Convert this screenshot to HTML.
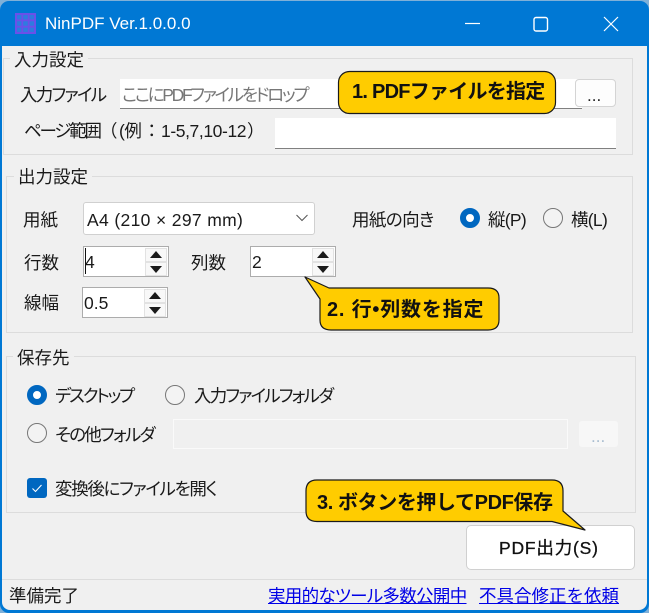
<!DOCTYPE html>
<html><head><meta charset="utf-8">
<style>
html,body{margin:0;padding:0;width:649px;height:613px;overflow:hidden;background:#7fb0d8}
*{box-sizing:border-box}
body{position:relative;font-family:"Liberation Sans","Noto Sans CJK JP",sans-serif;font-size:17.5px;color:#111}
.a{position:absolute}
.t{position:absolute;white-space:nowrap;line-height:20px;font-size:17.5px;color:#1a1a1a}
.p{font-feature-settings:"palt"}
.win{position:absolute;left:0;top:1px;width:649px;height:612px;background:#0078d4;border-radius:9px}
.client{position:absolute;left:2px;top:46px;width:645px;height:564px;background:#f0f0f0;border-radius:0 0 8px 8px}
.grp{position:absolute;border:1px solid #dcdcdc}
.leg{position:absolute;background:#f0f0f0;padding:0 4px;white-space:nowrap;line-height:20px;font-size:17.5px;color:#1a1a1a}
.inp{position:absolute;background:#fff;border-bottom:1px solid #808080}
.btn{position:absolute;background:#fdfdfd;border:1px solid #d0d0d0;border-radius:4px}
.spin{position:absolute;background:#fff;border:1px solid #acacac;width:86px;height:31px}
.sb{position:absolute;left:61px;width:22px;height:14px;background:#f8f8f8;border:1px solid #e2e2e2}
.up,.dn{position:absolute;left:4px;width:0;height:0;border-left:6px solid transparent;border-right:6px solid transparent}
.up{top:2px;border-bottom:7px solid #1a1a1a}
.dn{top:3px;border-top:7px solid #1a1a1a}
.rad{position:absolute;width:20px;height:20px;border-radius:50%;border:1px solid #777;background:#f3f3f3}
.rad.on{border:6px solid #0067c0;background:#fff}
.c{position:absolute;white-space:nowrap;font-weight:bold;font-size:20px;line-height:22px;color:#111}
</style></head><body>
<div class="win"></div>
<svg class="a" style="left:15px;top:13px" width="21" height="21" viewBox="0 0 21 21"><rect x="1" y="1" width="19" height="19" fill="#2f7ae0" stroke="#6a50e8" stroke-width="2"/><path d="M7.300 0V21M13.700 0V21M0 7.300H21M0 13.700H21" stroke="#6a50e8" stroke-width="1.800" fill="none"/></svg>
<div class="t" style="left:45px;top:13px;color:#fff;font-size:17px;line-height:22px">NinPDF Ver.1.0.0.0</div>
<svg class="a" style="left:460px;top:10px" width="170" height="28"><path d="M5 13.5H20" stroke="#fff" stroke-width="1.2"/><rect x="74" y="7.5" width="13.5" height="13.5" rx="2" fill="none" stroke="#fff" stroke-width="1.4"/><path d="M144 7L158 21M158 7L144 21" stroke="#fff" stroke-width="1.2"/></svg>
<div class="client"></div>

<div class="grp" style="left:3px;top:58px;width:630px;height:97px"></div>
<div class="leg" style="left:10px;top:50px">入力設定</div>
<div class="t p" style="left:20px;top:85px;letter-spacing:-1.7px">入力ファイル</div>
<div class="inp" style="left:120px;top:79px;width:462px;height:30px"></div>
<div class="t p" style="left:122px;top:85px;color:#777;letter-spacing:-2.3px">ここにPDFファイルをドロップ</div>
<div class="btn" style="left:575px;top:79px;width:41px;height:28px;border-color:#d4d4d4"></div>
<div class="t" style="left:587px;top:86px;font-size:17px;color:#222">...</div>
<div class="t p" style="left:24px;top:121px;letter-spacing:-2.2px">ページ範囲</div>
<div class="t" style="left:100px;top:121px">（</div>
<div class="t" style="left:119px;top:121px;letter-spacing:-.5px">(例</div>
<div class="t" style="left:143px;top:121px">：</div>
<div class="t" style="left:161px;top:121px;letter-spacing:-.4px">1-5,7,10-12</div>
<div class="t" style="left:247px;top:121px">）</div>
<div class="inp" style="left:275px;top:118px;width:341px;height:31px"></div>

<div class="grp" style="left:6px;top:176px;width:627px;height:157px"></div>
<div class="leg" style="left:14px;top:167px">出力設定</div>
<div class="t" style="left:23px;top:210px">用紙</div>
<div class="a" style="left:83px;top:202px;width:232px;height:33px;background:#fff;border:1px solid #d0d0d0;border-radius:3px"></div>
<div class="t" style="left:87px;top:210px;letter-spacing:.35px">A4 (210 × 297 mm)</div>
<svg class="a" style="left:295px;top:213px" width="14" height="10"><path d="M1.5 2L7 7.5L12.5 2" stroke="#555" fill="none"/></svg>
<div class="t p" style="left:352px;top:210px;letter-spacing:-.6px">用紙の向き</div>
<div class="rad on" style="left:460px;top:208px"></div>
<div class="t" style="left:488px;top:210px;letter-spacing:-.7px">縦(P)</div>
<div class="rad" style="left:543px;top:208px"></div>
<div class="t" style="left:571px;top:210px;letter-spacing:-.7px">横(L)</div>

<div class="t" style="left:24px;top:253px">行数</div>
<div class="spin" style="left:83px;top:246px"><div class="sb" style="top:1px"><i class="up"></i></div><div class="sb" style="top:15px"><i class="dn"></i></div></div>
<div class="t" style="left:85px;top:252px">4</div>
<div class="a" style="left:85px;top:248px;width:1px;height:26px;background:#111"></div>
<div class="t" style="left:191px;top:253px">列数</div>
<div class="spin" style="left:250px;top:246px"><div class="sb" style="top:1px"><i class="up"></i></div><div class="sb" style="top:15px"><i class="dn"></i></div></div>
<div class="t" style="left:252px;top:252px">2</div>
<div class="t" style="left:24px;top:293px">線幅</div>
<div class="spin" style="left:82px;top:287px"><div class="sb" style="top:1px"><i class="up"></i></div><div class="sb" style="top:15px"><i class="dn"></i></div></div>
<div class="t" style="left:84px;top:293px">0.5</div>

<div class="grp" style="left:6px;top:356px;width:630px;height:157px"></div>
<div class="leg" style="left:13px;top:348px">保存先</div>
<div class="rad on" style="left:27px;top:385px"></div>
<div class="t p" style="left:55px;top:386px;letter-spacing:-2.2px">デスクトップ</div>
<div class="rad" style="left:165px;top:385px"></div>
<div class="t p" style="left:194px;top:386px;letter-spacing:-1.8px">入力ファイルフォルダ</div>
<div class="rad" style="left:27px;top:423px"></div>
<div class="t p" style="left:55px;top:425px;letter-spacing:-1.7px">その他フォルダ</div>
<div class="a" style="left:173px;top:419px;width:395px;height:30px;background:#f0f0f0;border:1px solid #fafafa"></div>
<div class="a" style="left:578px;top:420px;width:41px;height:28px;background:#f7f7f7;border:1px solid #f0f0f0;border-radius:4px"></div>
<div class="t" style="left:591px;top:427px;font-size:17px;color:#a9bdd0">...</div>
<div class="a" style="left:27px;top:478px;width:20px;height:20px;background:#0067c0;border-radius:3px"></div>
<svg class="a" style="left:27px;top:478px" width="20" height="20"><path d="M5.5 10.5L8.5 13.5L14.5 7" stroke="#fff" fill="none" stroke-width="1.1"/></svg>
<div class="t p" style="left:55px;top:479px;letter-spacing:-1.3px">変換後にファイルを開く</div>

<div class="a" style="left:466px;top:525px;width:169px;height:45px;background:#fff;border:1px solid #d0d0d0;border-radius:5px"></div>
<div class="t" style="left:499px;top:538px;color:#111;-webkit-text-stroke:.3px #111;letter-spacing:.8px">PDF出力(S)</div>

<div class="a" style="left:2px;top:579px;width:645px;height:1px;background:#dcdcdc"></div>
<div class="t" style="left:9px;top:586px">準備完了</div>
<div class="t p" style="left:268px;top:586px;color:#0000e6;text-decoration:underline;letter-spacing:-.7px">実用的なツール多数公開中</div>
<div class="t" style="left:479px;top:586px;color:#0000e6;text-decoration:underline">不具合修正を依頼</div>

<svg class="a" style="left:0;top:0;overflow:visible" width="649" height="613">
<g fill="#ffcc00" stroke="#1a1a1a" stroke-width="1.2" stroke-linejoin="round">
<rect x="338.500" y="71.500" width="217" height="42" rx="11"/>
<path d="M305 277L329 288H488Q499 288 499 298V320Q499 330 488 330H331Q320 330 320 320V299Z"/>
<path d="M317 480H552Q563 480 563 491V511L585 530L552 521.500H317Q306 521.500 306 511V491Q306 480 317 480Z"/>
</g>
</svg>
<div class="c" style="left:352px;top:81px;letter-spacing:-.75px">1. PDFファイルを指定</div>
<div class="c" style="left:327px;top:299px;letter-spacing:.8px">2. 行•列数を指定</div>
<div class="c" style="left:317px;top:492px;letter-spacing:-.4px">3. ボタンを押してPDF保存</div>
</body></html>
